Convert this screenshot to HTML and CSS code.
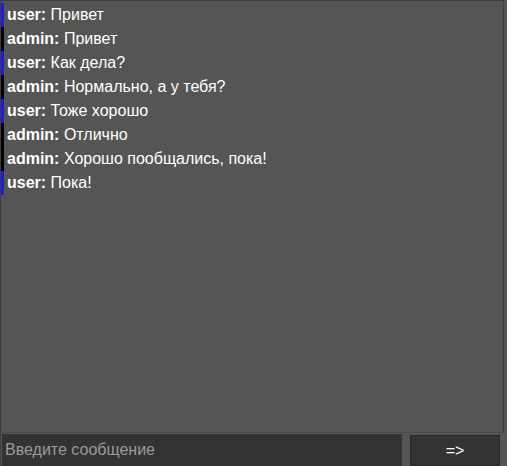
FILE: index.html
```html
<!DOCTYPE html>
<html lang="ru">

<head>
  <meta charset="UTF-8">
  <meta name="viewport" content="width=device-width, initial-scale=1.0">
  <title>Чат</title>
  <link rel="stylesheet" href="styles.css">
</head>

<body>
  <div class="chat">
    <div class="messages" id="messages">
      <div class="message user"><b>user:</b> Привет</div>
      <div class="message admin"><b>admin:</b> Привет</div>
      <div class="message user"><b>user:</b> Как дела?</div>
      <div class="message admin"><b>admin:</b> Нормально, а у тебя?</div>
      <div class="message user"><b>user:</b> Тоже хорошо</div>
      <div class="message admin"><b>admin:</b> Отлично</div>
      <div class="message admin"><b>admin:</b> Хорошо пообщались, пока!</div>
      <div class="message user"><b>user:</b> Пока!</div>
    </div>

    <form class="send-form">
      <input type="text" class="send-input" placeholder="Введите сообщение">
      <button type="button" class="send-btn">=&gt;</button>
    </form>
  </div>
</body>

</html>
```

FILE: styles.css
```css
* {
  box-sizing: border-box;
}

html,
body {
  margin: 0;
  padding: 0;
  height: 100%;
}

body {
  background: #555555;
  color: #ffffff;
  font-family: 'Liberation Sans', Arial, sans-serif;
  font-size: 16px;
}

.chat {
  display: flex;
  flex-direction: column;
  height: 100vh;
  width: 504px;
}

.messages {
  flex: 1;
  overflow-y: auto;
  border: 1px solid #3e3e3e;
  border-bottom: none;
  padding: 2px 0 0;
}

.message {
  border-left: 3px solid #000000;
  padding: 0 0 0 3px;
  height: 24px;
  line-height: 24px;
}

.message.user {
  border-left-color: #1c1ce0;
}

.message b {
  font-weight: bold;
}

.send-form {
  display: flex;
  gap: 8px;
  margin: 0;
  padding: 0 4px 0 1px;
  height: 34px;
  border-left: 1px solid #3e3e3e;
  border-top: 1px solid #4a4a4a;
  align-items: flex-end;
}

.send-input {
  width: 401px;
  height: 32px;
  background: #333333;
  border: none;
  color: #ffffff;
  font-family: inherit;
  font-size: 16px;
  padding: 0 3px;
  outline: none;
}

.send-input::placeholder {
  color: #9a9a9a;
}

.send-btn {
  width: 90px;
  height: 31px;
  background: #333333;
  border: 1px solid #2a2a2a;
  color: #ffffff;
  font-family: inherit;
  font-size: 16px;
  cursor: pointer;
}
```
